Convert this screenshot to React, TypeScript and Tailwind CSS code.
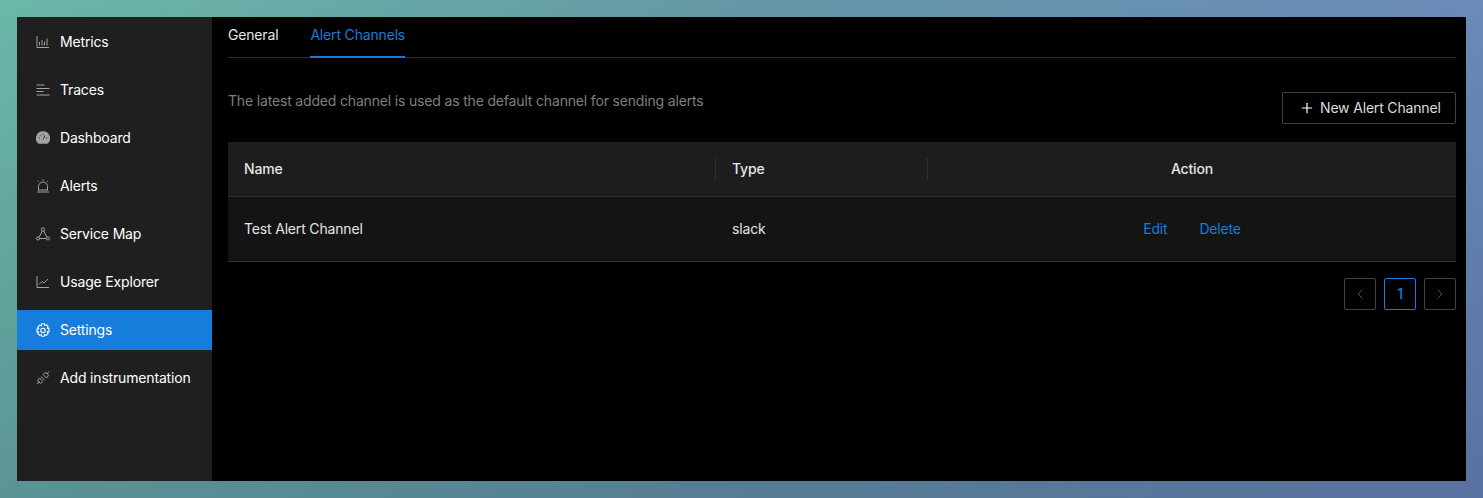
import { Plus, ChevronLeft, ChevronRight } from 'lucide-react';
import type { ReactNode } from 'react';

const iconProps = {
    width: 14,
    height: 14,
    viewBox: '0 0 14 14',
    fill: 'none',
    stroke: 'currentColor',
    strokeWidth: 1,
};

const menuItems: { label: string; icon: ReactNode; active?: boolean }[] = [
    {
        label: 'Metrics',
        icon: (
            <svg {...iconProps}>
                <path d="M1 1v11.500h12M3.500 10.500V7M6 10.500V5M8.500 10.500V6.500M11 10.500V3.500" />
            </svg>
        ),
    },
    {
        label: 'Traces',
        icon: (
            <svg {...iconProps} strokeWidth={1.2}>
                <path d="M.5 2h8M.5 5.500h13M.5 8.500h7M.5 12h13" />
            </svg>
        ),
    },
    {
        label: 'Dashboard',
        icon: (
            <svg {...iconProps} stroke="none" fill="currentColor">
                <path d="M7 .3a7 7 0 0 0-5.300 11.700c.3.400.8.700 1.300.7h8c.5 0 1-.3 1.300-.7A7 7 0 0 0 7 .3Z" />
                <path d="M7 8.500 9 4.500M2.800 7h1.200M10 7h1.200M7 2.800v1.200M4 4l.8.800" stroke="#1f1f1f" strokeWidth={0.8} />
            </svg>
        ),
    },
    {
        label: 'Alerts',
        icon: (
            <svg {...iconProps}>
                <path d="M2.500 11V7.500a4.500 4.500 0 0 1 9 0V11M1 13h12M2 11h10M7 .3v1.500M1.800 1.800l1 1M12.200 1.800l-1 1" />
            </svg>
        ),
    },
    {
        label: 'Service Map',
        icon: (
            <svg {...iconProps}>
                <circle cx="7" cy="2.500" r="1.700" />
                <circle cx="2" cy="11.500" r="1.500" />
                <circle cx="12" cy="11.500" r="1.500" />
                <path d="M6.300 4 3 10.200M7.700 4l3.300 6.200M3.500 11.500h7" />
            </svg>
        ),
    },
    {
        label: 'Usage Explorer',
        icon: (
            <svg {...iconProps}>
                <path d="M1 1v11.500h12M3 9.500l3-3 2 1.500 4-4" />
            </svg>
        ),
    },
    {
        label: 'Settings',
        active: true,
        icon: (
            <svg {...iconProps} strokeWidth={1.1}>
                <path d="M5.600 .8h2.800l.4 1.700 1.500-.9 1.900 2-.9 1.500 1.700.5v2.800l-1.700.5.9 1.500-1.900 2-1.500-.9-.4 1.700H5.600l-.4-1.700-1.500.9-1.900-2 .9-1.500L1 8.900V6.100l1.700-.5-.9-1.500 1.900-2 1.500.9Z" strokeLinejoin="round" />
                <circle cx="7" cy="7.500" r="2.200" />
            </svg>
        ),
    },
    {
        label: 'Add instrumentation',
        icon: (
            <svg {...iconProps}>
                <path d="M1 13l2.500-2.500M11 3l2-2.500M5 5.500l3.500 3.500M3.500 7l3.500 3.500-1 1a2 2 0 0 1-3-.2 2 2 0 0 1-.4-3.300ZM7 3.500l3.500 3.500 1-1a2.300 2.300 0 0 0-3.500-3.500Z" />
            </svg>
        ),
    },
];

function Sidebar() {
    return (
        <aside className="w-[195px] shrink-0 bg-[#1f1f1f] pt-[5px]">
            {menuItems.map((item) => (
                <div
                    key={item.label}
                    className={`mb-2 flex h-10 items-center gap-[10px] pl-[19px] text-sm text-white ${
                        item.active ? 'bg-[#177ddc]' : ''
                    }`}
                >
                    <span className={item.active ? 'text-white' : 'text-[#a3a3a3]'}>{item.icon}</span>
                    <span>{item.label}</span>
                </div>
            ))}
        </aside>
    );
}

function Tabs() {
    return (
        <div className="flex h-[41px] gap-8 border-b border-[#303030] text-sm">
            <div className="pt-2 text-[#e5e5e5]">General</div>
            <div className="-mb-px border-b-2 border-[#177ddc] pt-2 text-[#177ddc]">Alert Channels</div>
        </div>
    );
}

function ChannelTable() {
    return (
        <div className="mt-[18px] text-sm text-[#e5e5e5]">
            <div className="flex h-[55px] items-center border-b border-[#303030] bg-[#1d1d1d] font-medium">
                <div className="w-[488px] border-r border-[#303030] pl-4 leading-[22px]">Name</div>
                <div className="w-[212px] border-r border-[#303030] pl-4 leading-[22px]">Type</div>
                <div className="flex-1 text-center">Action</div>
            </div>
            <div className="flex h-[65px] items-center border-b border-[#303030] bg-[#141414]">
                <div className="w-[488px] pl-4">Test Alert Channel</div>
                <div className="w-[212px] pl-4">slack</div>
                <div className="flex flex-1 justify-center gap-8 text-[#177ddc]">
                    <span>Edit</span>
                    <span>Delete</span>
                </div>
            </div>
        </div>
    );
}

function Pagination() {
    return (
        <div className="mt-4 flex justify-end gap-2 text-sm">
            <div className="flex h-8 w-8 items-center justify-center rounded-xs border border-[#434343] text-[#6a6a6a]">
                <ChevronLeft size={16} strokeWidth={1.2} />
            </div>
            <div className="flex h-8 w-8 items-center justify-center rounded-xs border border-[#177ddc] font-medium text-[#177ddc]">
                1
            </div>
            <div className="flex h-8 w-8 items-center justify-center rounded-xs border border-[#434343] text-[#6a6a6a]">
                <ChevronRight size={16} strokeWidth={1.2} />
            </div>
        </div>
    );
}

export default function App() {
    return (
        <div className="h-[498px] w-[1483px] overflow-hidden bg-[linear-gradient(to_bottom,rgba(40,40,90,0)_0%,rgba(40,40,90,0.25)_100%),linear-gradient(to_right,#6bb8a8_0%,#6498a6_50%,#6a8ab8_100%)] p-[17px] font-['Inter','Liberation_Sans',sans-serif] tracking-[-0.17px]">
            <div className="flex h-[464px] w-[1449px] bg-black">
                <Sidebar />
                <main className="flex-1 pl-4 pr-[10px]">
                    <Tabs />
                    <div className="mt-[34px] flex items-start justify-between">
                        <p className="-mt-[2px] text-sm leading-[22px] text-[#7f7f7f]">
                            The latest added channel is used as the default channel for sending alerts
                        </p>
                        <button className="flex h-8 w-[174px] items-center gap-[5px] rounded-xs border border-[#434343] pl-[16px] text-sm text-[#dcdcdc]">
                            <Plus size={16} strokeWidth={1.8} className="text-white" />
                            New Alert Channel
                        </button>
                    </div>
                    <ChannelTable />
                    <Pagination />
                </main>
            </div>
        </div>
    );
}
